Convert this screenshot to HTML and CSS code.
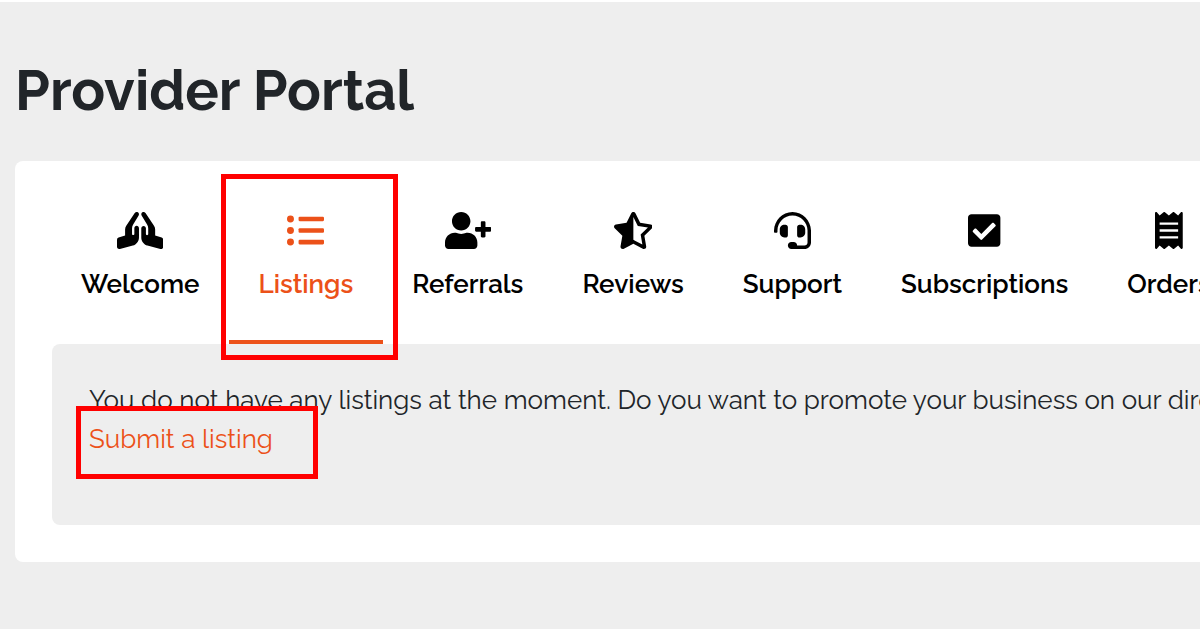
FILE: index.html
```html
<!DOCTYPE html>
<html lang="en">
    <head>
        <meta charset="utf-8">
        <title>Provider Portal</title>
        <link rel="stylesheet" href="styles.css">
    </head>
    <body>
        <main class="portal">
            <h1>Provider Portal</h1>
            <div class="panel">
                <nav class="tabs">
                    <a class="tab" href="#welcome">
                        <svg class="icon" viewBox="0 0 640 512" aria-hidden="true"><path d="M272 191.91c-17.6 0-32 14.4-32 32v80c0 8.84-7.16 16-16 16s-16-7.16-16-16v-76.55c0-17.39 4.72-34.47 13.69-49.39l77.75-129.59c9.09-15.16 4.19-34.81-10.97-43.91-14.45-8.67-32.72-4.3-42.3 9.21-.2.23-.62.21-.79.48l-117.26 175.9C117.56 205.9 112 224.31 112 243.29v80.23l-90.12 30.04A31.974 31.974 0 0 0 0 383.91v96c0 10.82 8.52 32 32 32 2.69 0 5.41-.34 8.06-1.03l179.19-46.62C269.16 449.99 304 403.8 304 351.91v-128c0-17.6-14.4-32-32-32zm346.12 161.64L528 323.6v-80.23c0-18.98-5.56-37.39-16.12-53.23L394.62 14.25c-.18-.27-.59-.24-.79-.48-9.58-13.5-27.85-17.88-42.3-9.21-15.16 9.09-20.06 28.75-10.97 43.91l77.75 129.59c8.97 14.92 13.69 32 13.69 49.39V304c0 8.84-7.16 16-16 16s-16-7.16-16-16v-80c0-17.6-14.4-32-32-32s-32 14.4-32 32v128c0 51.89 34.84 98.08 84.75 112.34l179.19 46.62c2.66.69 5.38 1.03 8.06 1.03 23.48 0 32-21.18 32-32v-96c0-13.77-8.81-25.99-21.88-30.44z"/></svg>
                        <span>Welcome</span>
                    </a>
                    <a class="tab active" href="#listings">
                        <svg class="icon" viewBox="0 0 512 512" aria-hidden="true"><circle cx="48" cy="96" r="48"/><circle cx="48" cy="256" r="48"/><circle cx="48" cy="416" r="48"/><rect x="160" y="64" width="352" height="64" rx="16"/><rect x="160" y="224" width="352" height="64" rx="16"/><rect x="160" y="384" width="352" height="64" rx="16"/></svg>
                        <span>Listings</span>
                        <i class="mark mark-tab"></i>
                    </a>
                    <a class="tab" href="#referrals">
                        <svg class="icon" viewBox="0 0 640 512" aria-hidden="true"><path d="M624 208h-64v-64c0-8.8-7.2-16-16-16h-32c-8.8 0-16 7.2-16 16v64h-64c-8.8 0-16 7.2-16 16v32c0 8.8 7.2 16 16 16h64v64c0 8.8 7.2 16 16 16h32c8.8 0 16-7.2 16-16v-64h64c8.8 0 16-7.2 16-16v-32c0-8.8-7.2-16-16-16zm-400 48c70.7 0 128-57.3 128-128S294.7 0 224 0 96 57.3 96 128s57.3 128 128 128zm89.6 32h-16.7c-22.2 10.2-46.9 16-72.9 16s-50.6-5.8-72.9-16h-16.7C60.2 288 0 348.2 0 422.4V464c0 26.5 21.5 48 48 48h352c26.5 0 48-21.5 48-48v-41.6c0-74.2-60.2-134.4-134.4-134.4z"/></svg>
                        <span>Referrals</span>
                    </a>
                    <a class="tab" href="#reviews">
                        <svg class="icon" viewBox="0 0 536 512" aria-hidden="true"><path d="M508.55 171.51L362.18 150.2 296.77 17.81C290.89 5.98 279.42 0 267.95 0c-11.4 0-22.79 5.9-28.69 17.81l-65.43 132.38-146.38 21.29c-26.25 3.8-36.77 36.09-17.74 54.59l105.89 103-25.06 145.48C86.98 495.33 103.57 512 122.15 512c4.93 0 10-1.17 14.87-3.75l130.95-68.68 130.94 68.7c4.86 2.55 9.92 3.71 14.83 3.71 18.6 0 35.22-16.61 31.66-37.4l-25.03-145.49 105.91-102.98c19.04-18.5 8.52-50.8-17.73-54.6zm-121.74 123.2l-18.12 17.62 4.28 24.88 19.52 113.45-102.13-53.59-22.38-11.74.03-317.19 51.03 103.29 11.18 22.63 25.01 3.64 114.23 16.63-82.65 80.38z"/></svg>
                        <span>Reviews</span>
                    </a>
                    <a class="tab" href="#support">
                        <svg class="icon" viewBox="0 0 512 512" aria-hidden="true"><path d="M192 208c0-17.67-14.33-32-32-32h-16c-35.35 0-64 28.65-64 64v48c0 35.35 28.65 64 64 64h16c17.67 0 32-14.33 32-32V208zm176 144c35.35 0 64-28.65 64-64v-48c0-35.35-28.65-64-64-64h-16c-17.67 0-32 14.33-32 32v112c0 17.67 14.33 32 32 32h16zM256 0C113.18 0 4.58 118.83 0 256v16c0 8.84 7.16 16 16 16h16c8.84 0 16-7.16 16-16v-16c0-114.69 93.31-208 208-208s208 93.31 208 208h-.12c.08 2.43.12 165.72.12 165.72 0 23.35-18.93 42.28-42.28 42.28H320c0-26.51-21.49-48-48-48h-32c-26.51 0-48 21.49-48 48s21.49 48 48 48h181.72c49.86 0 90.28-40.42 90.28-90.28V256C507.42 118.83 398.82 0 256 0z"/></svg>
                        <span>Support</span>
                    </a>
                    <a class="tab" href="#subscriptions">
                        <svg class="icon" viewBox="0 0 448 512" aria-hidden="true"><path d="M400 480H48c-26.51 0-48-21.49-48-48V80c0-26.51 21.49-48 48-48h352c26.51 0 48 21.49 48 48v352c0 26.51-21.49 48-48 48zm-204.686-98.059l184-184c6.248-6.248 6.248-16.379 0-22.627l-22.627-22.627c-6.248-6.248-16.379-6.249-22.628 0L184 302.745l-70.059-70.059c-6.248-6.248-16.379-6.248-22.628 0l-22.627 22.627c-6.248 6.248-6.248 16.379 0 22.627l104 104c6.249 6.25 16.379 6.25 22.628.001z"/></svg>
                        <span>Subscriptions</span>
                    </a>
                    <a class="tab" href="#orders">
                        <svg class="icon" viewBox="0 0 384 512" aria-hidden="true"><path fill-rule="evenodd" d="M358.4 3.2L320 48 265.6 3.2a15.9 15.9 0 0 0-19.2 0L192 48 137.6 3.2a15.9 15.9 0 0 0-19.2 0L64 48 25.6 3.2C15-4.7 0 2.8 0 16v480c0 13.2 15 20.7 25.6 12.8L64 464l54.4 44.8a15.9 15.9 0 0 0 19.2 0L192 464l54.4 44.8a15.9 15.9 0 0 0 19.2 0L320 464l38.4 44.8c10.5 7.9 25.6.4 25.6-12.8V16c0-13.2-15-20.7-25.6-12.8zM64 144h256v32H64zM64 240h256v32H64zM64 336h256v32H64z"/></svg>
                        <span>Orders</span>
                    </a>
                </nav>
                <section class="content">
                    <p>You do not have any listings at the moment. Do you want to promote your business on our directory?<br>
                    <a class="submit" href="#submit">Submit a listing<i class="mark mark-link"></i></a></p>
                </section>
            </div>
        </main>
    </body>
</html>
```

FILE: styles.css
```css
body {
    margin: 0;
    background-color: #eee;
    border-top: 2px solid #fff;
    color: #212529;
    font-family: Raleway, Lato, sans-serif;
    font-size: 26px;
    line-height: 39px;
    overflow: hidden;
}
.portal {
    padding: 54px 0 0 15px;
}
h1 {
    margin: 0 0 37px;
    font-size: 56px;
    line-height: 68px;
    font-weight: 700;
}
.panel {
    padding: 37px 0 37px 37px;
    background-color: #fff;
    border-radius: 8px 0 0 8px;
}
.tabs {
    display: flex;
    white-space: nowrap;
}
.tab {
    position: relative;
    display: flex;
    flex: none;
    flex-direction: column;
    align-items: center;
    gap: 16px;
    padding: 14px 30px 36px 29px;
    border-bottom: 4px solid transparent;
    color: #000;
    font-weight: 600;
    text-decoration: none;
}
.tab.active {
    color: #ec5119;
    border-bottom-color: #ec5119;
}
.icon {
    height: 37px;
    fill: currentColor;
}
.content {
    padding: 37px 0 37px 37px;
    background-color: #eee;
    border-radius: 8px 0 0 8px;
    white-space: nowrap;
}
.content p {
    margin: 0 0 29px;
}
.submit {
    position: relative;
    color: #ec5119;
    text-decoration: none;
}
/* red outlines that point out where to click */
.mark {
    position: absolute;
    border: 5px solid #f00;
}
.mark-tab {
    top: -24px;
    right: -15px;
    bottom: -20px;
    left: -8px;
}
.mark-link {
    top: -18px;
    right: -45px;
    bottom: -25px;
    left: -13px;
}
```
